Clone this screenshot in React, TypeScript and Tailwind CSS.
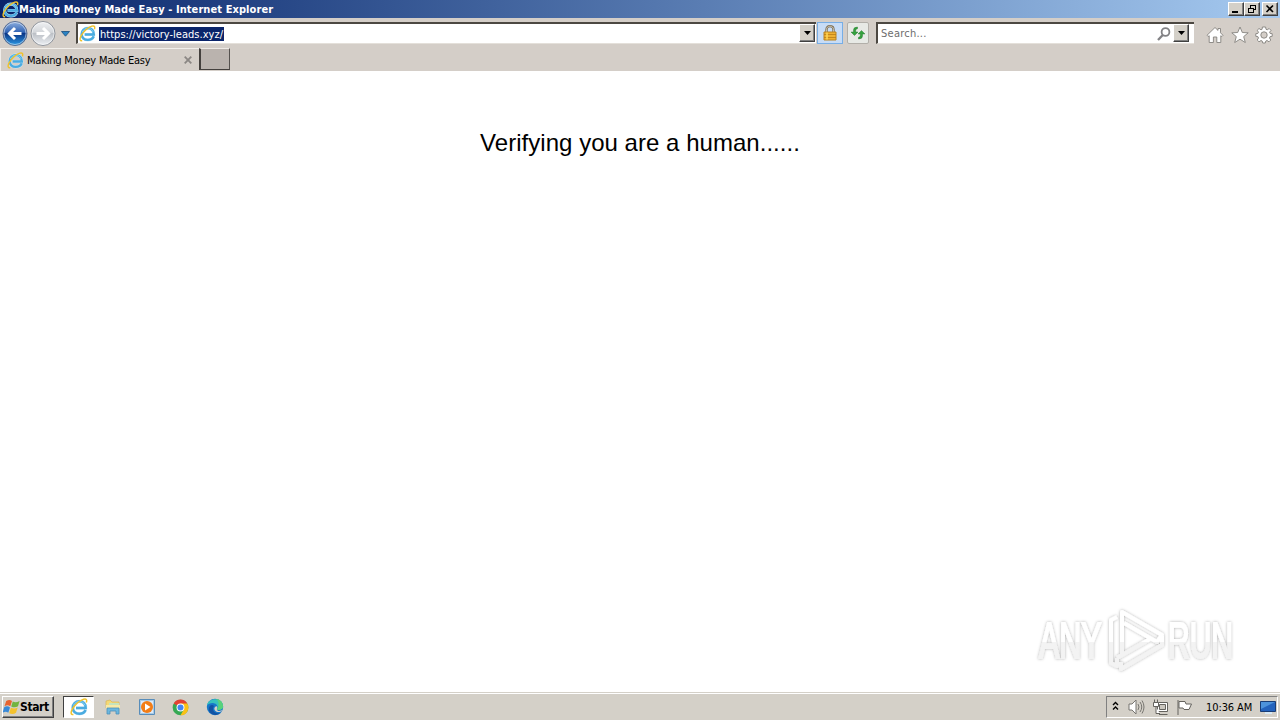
import type { ReactNode } from "react";

const raised =
  "border border-t-white border-l-white border-r-[#404040] border-b-[#404040] bg-[#d4d0c8] shadow-[inset_-1px_-1px_0_#808080]";

function IeLogo({ size = 17 }: { size?: number }) {
  return (
    <svg width={size} height={size} viewBox="0 0 18 18" className="block shrink-0">
      <path d="M15.6 12C14.5 14.6 12.2 15.8 9.3 15.8C5.4 15.8 2.8 13.4 2.8 9.8C2.8 6 5.7 3.3 9.3 3.3C13.2 3.3 15.8 6 15.7 10H6" fill="none" stroke="#cdeaf8" strokeWidth="3.2" />
      <path d="M15.6 12C14.5 14.6 12.2 15.8 9.3 15.8C5.4 15.8 2.8 13.4 2.8 9.8C2.8 6 5.7 3.3 9.3 3.3C13.2 3.3 15.8 6 15.7 10H6" fill="none" stroke="#4aabe0" strokeWidth="2.5" />
      <path d="M3.4 7.5C4.6 4.8 6.9 3.4 9.3 3.4C12 3.4 14.2 4.8 15 7.4" fill="none" stroke="#83d3f4" strokeWidth="1" />
      <path d="M3.4 16.5C.8 17.2 .5 14.5 2.3 11.2C4.6 7 9.8 2.3 13.6 1.2C16.4 .4 17.2 1.9 16.3 4.6" fill="none" stroke="#f0c22c" strokeWidth="1.5" />
    </svg>
  );
}

function Arrow() {
  return (
    <svg width="7" height="4" viewBox="0 0 7 4" className="block">
      <path d="M0 0H7L3.5 4Z" fill="#000" />
    </svg>
  );
}

function DropButton() {
  return <div className={`flex h-[18px] w-4 shrink-0 items-center justify-center ${raised}`}><Arrow /></div>;
}

function WinButton({ children }: { children: ReactNode }) {
  return (
    <div className={`h-[14px] w-4 ${raised}`}>
      <svg width="14" height="12" viewBox="0 0 14 12" className="block" fill="none" stroke="#000" shapeRendering="crispEdges">
        {children}
      </svg>
    </div>
  );
}

function NavCircle({ blue }: { blue?: boolean }) {
  const id = blue ? "navBack" : "navForward";
  return (
    <svg width="26" height="27" viewBox="0 0 26 27" className="block shrink-0">
      <defs>
        <linearGradient id={id} x1="0" y1="0" x2="0" y2="1">
          <stop offset="0" stopColor={blue ? "#8fb0df" : "#f0f1f3"} />
          <stop offset=".45" stopColor={blue ? "#3264b4" : "#d3d6da"} />
          <stop offset=".5" stopColor={blue ? "#0b3686" : "#bcc0c6"} />
          <stop offset="1" stopColor={blue ? "#2c9be6" : "#eef1f5"} />
        </linearGradient>
      </defs>
      <circle cx="13" cy="13.5" r="12" fill={`url(#${id})`} stroke={blue ? "#596d91" : "#8f949c"} />
      <circle cx="13" cy="13.5" r="11" fill="none" stroke="#fff" strokeOpacity=".5" />
      {blue ? (
        <path d="M19.5 13.5H8M13 8L7.5 13.5L13 19" fill="none" stroke="#fff" strokeWidth="3" />
      ) : (
        <path d="M6.5 13.5H18M13 8L18.5 13.5L13 19" fill="none" stroke="#fff" strokeWidth="3" />
      )}
    </svg>
  );
}

function TitleBar() {
  return (
    <div className="flex h-[18px] items-center bg-gradient-to-r from-[#0a246a] to-[#a6caf0] pr-[2px] pl-[2px]">
      <IeLogo size={17} />
      <span className="w-[300px] pt-px font-['DejaVu_Sans_Condensed','DejaVu_Sans',sans-serif] text-[11px] leading-[17px] font-bold tracking-[0.08px] whitespace-nowrap text-white">
        Making Money Made Easy - Internet Explorer
      </span>
      <div className="ml-auto flex">
        <WinButton><path d="M3 9H9" strokeWidth="2" /></WinButton>
        <WinButton>
          <path d="M5 2H11M5.5 2V5M10.5 2V7M8 6.5H11M3 5H9M3.5 5V10M8.5 5V10M3 9.5H9" />
          <path d="M5 2.5H11M3 5.5H9" />
        </WinButton>
        <div className="w-[2px]" />
        <WinButton><path d="M3.5 2.5L10 9M10 2.5L3.5 9" strokeWidth="1.6" shapeRendering="auto" /></WinButton>
      </div>
    </div>
  );
}

function NavBar() {
  return (
    <div className="flex h-[30px] items-start pl-[2px]">
      <div className="flex items-center gap-[2px] pt-[2px]"><NavCircle blue /><NavCircle /></div>
      <svg width="9" height="6" viewBox="0 0 9 6" className="mt-[13px] ml-[5px] shrink-0">
        <path d="M.5 .5H8.5L4.5 5.2Z" fill="#2a83c4" stroke="#164c7e" strokeWidth=".8" />
      </svg>
      <div className="mt-1 ml-[6px] flex h-[22px] w-[740px] items-center border-t-2 border-b border-l-2 border-t-[#4c4842] border-b-[#e4e0da] border-l-[#4c4842] bg-white pl-px">
        <IeLogo size={17} />
        <span className="ml-[3px] h-[14px] w-[125px] bg-[#0a246a] pl-px font-['DejaVu_Sans_Condensed','DejaVu_Sans',sans-serif] text-[11px] leading-[15px] tracking-[0.02px] whitespace-nowrap text-white">
          https://victory-leads.xyz/
        </span>
        <div className="ml-auto pr-px pb-px"><DropButton /></div>
      </div>
      <div className="mt-1 ml-px flex h-[22px] w-[26px] items-center justify-center border border-[#77aee6] bg-[#c7dcf6]">
        <svg width="14" height="16" viewBox="0 0 14 16">
          <path d="M3.5 8V4.5C3.5 0 10.5 0 10.5 4.5V8" fill="none" stroke="#77694f" strokeWidth="2.3" />
          <path d="M3.5 8V4.5C3.5 0 10.5 0 10.5 4.5V8" fill="none" stroke="#ded8c8" strokeWidth=".8" />
          <path d="M1 7H13V15H1Z" fill="#eeb032" stroke="#b98221" />
          <path d="M1 9.5H13M1 12.5H13" stroke="#b97d17" strokeWidth=".8" />
          <path d="M4 7.5V14.5" stroke="#ffd757" strokeWidth="1.5" />
        </svg>
      </div>
      <div className="mt-1 ml-[4px] flex h-[22px] w-[22px] items-center justify-center rounded-[2px] border border-[#b2afa9] bg-[#e7e9e5]">
        <svg width="16" height="14" viewBox="0 0 16 14" fill="#35a13f" stroke="#177020" strokeWidth=".4">
          <path d="M3.5 6V4Q3.5 1 7.5 1V2.7Q5.7 2.8 5.7 4.5V6H8L4.5 9.5L1 6Z" />
          <path d="M12.5 8V10Q12.5 13 8.5 13V11.3Q10.3 11.2 10.3 9.5V8H8L11.5 4.5L15 8Z" />
        </svg>
      </div>
      <div className="mt-1 ml-[7px] flex h-[22px] w-[318px] items-center border-t-2 border-b border-l-2 border-t-[#4c4842] border-b-[#e4e0da] border-l-[#4c4842] bg-white">
        <span className="ml-[3px] pt-px font-['DejaVu_Sans_Condensed','DejaVu_Sans',sans-serif] text-[11px] leading-[14px] tracking-[0.25px] text-[#6d6d6d]">Search...</span>
        <svg width="14" height="14" viewBox="0 0 14 14" className="mr-[2px] ml-auto" fill="none" stroke="#828285">
          <circle cx="8.5" cy="5" r="3.9" strokeWidth="1.8" />
          <path d="M5.8 8L1 13" strokeWidth="2.3" />
        </svg>
        <div className="pr-[5px] pb-px"><DropButton /></div>
      </div>
      <div className="mt-[8px] ml-[12px] flex gap-[6.5px]">
        <svg width="18" height="18" viewBox="0 0 18 18" fill="#fff" stroke="#85827e" strokeWidth=".9">
          <path d="M1 9.3L9 1.5L12 4.4V2.5H14.5V6.8L17 9.3L15.8 10.5L14.8 9.7V16.5H10.8V11H7.4V16.5H3.2V9.7L2.2 10.5Z" />
        </svg>
        <svg width="18" height="18" viewBox="0 0 18 18" fill="#fff" stroke="#85827e" strokeWidth=".9">
          <path d="M9 1L11.3 6.5L17.2 6.8L12.7 10.6L14.3 16.5L9 13.2L3.7 16.5L5.3 10.6L.8 6.8L6.7 6.5Z" />
        </svg>
        <svg width="18" height="18" viewBox="0 0 18 18" fill="#fff" stroke="#85827e" strokeWidth=".9">
          <path d="M7.4 1H10.6L11 3.3L12.2 3.8L14.2 2.5L16 4.4L14.6 6.2L15 7.3L17.2 7.7V10.3L15 10.7L14.5 12L15.8 14L14 15.8L12 14.5L10.8 15L10.3 17H7.7L7.2 15L6 14.5L4 15.8L2.2 14L3.5 12L3 10.7L.8 10.3V7.7L3 7.3L3.5 6.2L2.2 4.3L4 2.5L6 3.8L7.1 3.3Z" />
          <circle cx="9" cy="9" r="3.2" fill="#d4cec8" />
        </svg>
      </div>
    </div>
  );
}

function TabBar() {
  return (
    <div className="flex h-[23px]">
      <div className="flex h-[23px] w-[199px] items-center border-t border-l border-t-[#f2efeb] border-l-[#f2efeb] pl-[6px]">
        <IeLogo size={17} />
        <span className="ml-[3px] pt-px font-['DejaVu_Sans_Condensed','DejaVu_Sans',sans-serif] text-[11px] leading-[14px] tracking-[-0.22px] whitespace-nowrap text-black">
          Making Money Made Easy
        </span>
        <svg width="8" height="8" viewBox="0 0 8 8" className="mr-[7px] ml-auto">
          <path d="M.7 .7L7.3 7.3M7.3 .7L.7 7.3" stroke="#8b8784" strokeWidth="1.8" />
        </svg>
      </div>
      <div className="h-[22px] w-[31px] border-t border-r border-b border-l-2 border-t-[#eeeae6] border-r-[#55514e] border-b-[#44403d] border-l-[#44403d] bg-[#bab3ae]" />
    </div>
  );
}

function Watermark() {
  return (
    <svg width="240" height="90" viewBox="1020 595 240 90" className="absolute top-[524px] left-[1020px]">
      <defs>
        <linearGradient id="wmFill" gradientUnits="userSpaceOnUse" x1="0" y1="610" x2="0" y2="671">
          <stop offset="0" stopColor="#fff" />
          <stop offset=".52" stopColor="#fff" />
          <stop offset=".53" stopColor="#f3f3f3" />
          <stop offset="1" stopColor="#f3f3f3" />
        </linearGradient>
        <linearGradient id="wmText" gradientUnits="userSpaceOnUse" x1="0" y1="-48" x2="0" y2="13">
          <stop offset=".52" stopColor="#fff" />
          <stop offset=".53" stopColor="#f3f3f3" />
        </linearGradient>
        <filter id="wmShadow" x="-10%" y="-20%" width="120%" height="140%">
          <feDropShadow dx="0" dy="0" stdDeviation="1.7" floodColor="#000" floodOpacity=".32" />
        </filter>
      </defs>
      <g filter="url(#wmShadow)" fill="url(#wmText)" stroke="url(#wmText)" strokeWidth="2" fontFamily="'Liberation Sans',Arial,sans-serif" fontSize="50">
        <text transform="translate(1039 658) scale(.61 1)">ANY</text>
        <text transform="translate(1168 658) scale(.6 1)">RUN</text>
      </g>
      <g filter="url(#wmShadow)" fill="none" stroke="url(#wmFill)" strokeWidth="4" strokeLinejoin="round">
        <path d="M1122 654V612L1162 635L1157 642L1124 623" />
        <path d="M1117 617L1111 620V663L1117 666V658" />
        <path d="M1117 658L1150 639M1121 662V669L1162 645V636" />
      </g>
    </svg>
  );
}

function TaskIcons() {
  return (
    <>
      <svg width="18" height="18" viewBox="0 0 18 18" className="ml-[10px]">
        <path d="M2 3L6 2L8 4H15V10H2Z" fill="#f5d976" stroke="#d7b656" strokeWidth=".7" />
        <path d="M5 5H15V10H5Z" fill="#c5e4bd" />
        <path d="M2 7H16V11H2Z" fill="#f8e9a6" />
        <path d="M3 16V10H15V16H12V13H6V16Z" fill="#6bb7df" stroke="#4b8fb9" strokeWidth=".8" />
      </svg>
      <svg width="18" height="18" viewBox="0 0 18 18" className="ml-[16px]">
        <path d="M1.5 1.5H16.5V16.5H1.5Z" fill="#a8cbe6" stroke="#588dba" />
        <path d="M3 3H15V15H3Z" fill="#dceafa" />
        <circle cx="9" cy="9" r="6" fill="#f27d16" />
        <path d="M7 5.5L12.5 9L7 12.5Z" fill="#fff" />
      </svg>
      <svg width="17" height="17" viewBox="0 0 18 18" className="ml-[16px]">
        <circle cx="9" cy="9" r="8.3" fill="#35a853" />
        <path d="M9 9L1.8 4.8A8.3 8.3 0 0 1 16.2 4.8Z" fill="#e34133" />
        <path d="M9 4.8H16.2A8.3 8.3 0 0 1 9 17.3L12.6 11Z" fill="#fbc116" />
        <circle cx="9" cy="9" r="4.2" fill="#fff" />
        <circle cx="9" cy="9" r="3.2" fill="#4285f4" />
      </svg>
      <svg width="18" height="18" viewBox="0 0 18 18" className="ml-[17px]">
        <circle cx="9" cy="9" r="8.2" fill="#1677c9" />
        <path d="M1 7.5C2-1 17-1 17.1 8.6C17.1 12 13 12.5 10.8 11.5C12.5 9.5 11.5 5.8 7.8 5.2C4.8 4.8 2 6 1 7.5Z" fill="#36c2bd" />
        <path d="M10 1C16 1.5 17 6 17.1 8.6C17.1 11.8 13 12.4 10.8 11.5C13.8 7 12.8 3 10 1Z" fill="#59d27b" />
        <path d="M8 8C5 12 9 16.5 14.6 15C10 19 2.5 16.5 2.8 11C3 7.5 6 6 8 8Z" fill="#1253a4" />
        <path d="M10.8 8.2C12 10 10 11.3 11.5 12.5C13.5 14 16 12 16.8 11.5C15 15 9.3 15 8.4 11.3C8 9.5 9.3 8 10.8 8.2Z" fill="#d4d0c8" />
      </svg>
    </>
  );
}

function Tray() {
  return (
    <div className="mr-[2px] ml-auto flex h-[22px] w-[172px] items-center border border-t-[#808080] border-r-white border-b-white border-l-[#808080]">
      <svg width="7" height="10" viewBox="0 0 7 10" className="mb-[2px] ml-[5px]" fill="none" stroke="#000" strokeWidth="1.4">
        <path d="M1 4L3.5 1.5L6 4M1 8.5L3.5 6L6 8.5" />
      </svg>
      <svg width="17" height="16" viewBox="0 0 17 16" className="ml-[9px]" fill="none" stroke="#777570">
        <path d="M1 5H4L8 1V15L4 11H1Z" fill="#fff" />
        <path d="M10 5Q12 8 10 11M12 3Q15.5 8 12 13M14 1.5Q18 8 14 14.5" />
      </svg>
      <svg width="17" height="17" viewBox="0 0 17 17" className="ml-[7px]" fill="#fff" stroke="#65635e">
        <path d="M5.5 3.5H15.5V12.5H5.5ZM7 15.5H15.5" />
        <path d="M7.5 5.5H13.5V10.5H7.5Z" fill="#cbc7bf" />
        <path d="M1.5 3.5H6.5V7.5H1.5ZM2.5 3V.5M5.5 3V.5M4 8V14.5H8" />
      </svg>
      <svg width="17" height="17" viewBox="0 0 17 17" className="ml-[7px]" fill="#fff" stroke="#65635e">
        <path d="M2 1V16M3 2.5H9L10 5H15.5L13 10.5H8L7 9H3Z" />
      </svg>
      <span className="ml-[13px] pt-px font-['DejaVu_Sans_Condensed','DejaVu_Sans',sans-serif] text-[11px] leading-[14px] tracking-[-0.1px] whitespace-nowrap text-black">10:36 AM</span>
      <svg width="16" height="14" viewBox="0 0 16 14" className="mr-[1px] ml-auto">
        <path d="M.5 1.5H15.5V11.5H.5Z" fill="#2463bd" stroke="#193d76" />
        <path d="M1 2H15L1 9Z" fill="#4d93dc" />
        <path d="M5 13H12" stroke="#d8e9f5" strokeWidth="2" />
      </svg>
    </div>
  );
}

function Taskbar() {
  return (
    <div className="flex h-7 items-center border-t border-[#d4d0c8] bg-[#d4d0c8] pt-px shadow-[inset_0_1px_0_white]">
      <div className={`ml-[2px] flex h-[22px] w-[52px] items-center ${raised}`}>
        <svg width="17" height="16" viewBox="0 0 17 16" className="shrink-0">
          <path d="M3.2 2Q6.5-.2 9 2L7.3 7.3Q4.7 5.2 1.5 7.3Z" fill="#e8632f" />
          <path d="M9.8 2.5Q12.5 4.2 16.6 2L15 7.3Q11.8 9.3 8.2 7.5Z" fill="#72b43f" />
          <path d="M1.2 8.2Q4.2 6.2 7 8.4L5.3 13.7Q2.8 11.6 -.4 13.7Z" fill="#3989d7" />
          <path d="M7.9 8.8Q11.5 10.4 14.7 8.5L13 13.8Q9.8 16 6.2 14.2Z" fill="#f4c22d" />
        </svg>
        <span className="font-['DejaVu_Sans_Condensed','DejaVu_Sans',sans-serif] text-[12px] leading-4 font-bold tracking-[-0.4px] text-black">Start</span>
      </div>
      <div className="ml-[9px] flex h-[22px] w-[31px] items-center justify-center border border-t-[#404040] border-r-white border-b-white border-l-[#404040] bg-white">
        <IeLogo size={18} />
      </div>
      <TaskIcons />
      <Tray />
    </div>
  );
}

export default function App() {
  return (
    <div className="flex h-[720px] w-[1280px] flex-col overflow-hidden bg-white">
      <TitleBar />
      <div className="bg-[#d4cec8]">
        <NavBar />
        <TabBar />
      </div>
      <main className="relative flex flex-1 justify-center bg-white pt-[58px]">
        <p className="h-7 font-['Liberation_Sans',Arial,sans-serif] text-[24px] leading-7 tracking-[0.03px] whitespace-nowrap text-black">
          Verifying you are a human......
        </p>
        <Watermark />
      </main>
      <Taskbar />
    </div>
  );
}
